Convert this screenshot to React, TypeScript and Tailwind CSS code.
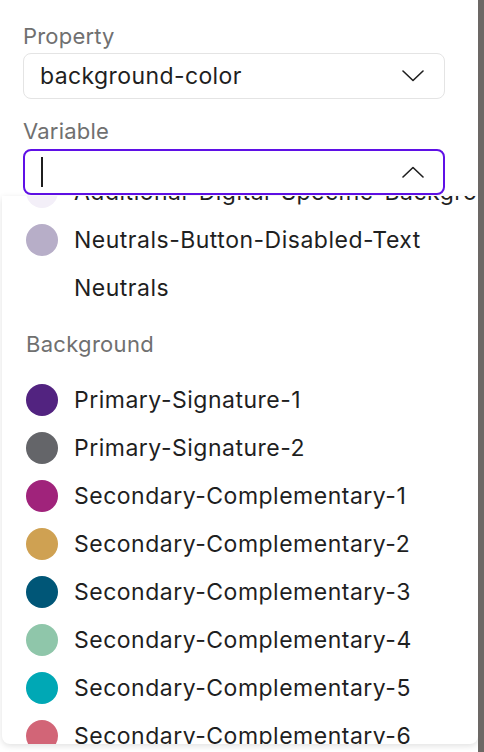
import React from 'react';

type Item = { name: string; color?: string };

const topItems: Item[] = [
  { name: 'Additional-Digital-Specific-Background', color: '#f3eff8' },
  { name: 'Neutrals-Button-Disabled-Text', color: '#b7aec8' },
  { name: 'Neutrals' },
];

const backgroundItems: Item[] = [
  { name: 'Primary-Signature-1', color: '#522380' },
  { name: 'Primary-Signature-2', color: '#646569' },
  { name: 'Secondary-Complementary-1', color: '#a0237b' },
  { name: 'Secondary-Complementary-2', color: '#cfa152' },
  { name: 'Secondary-Complementary-3', color: '#005677' },
  { name: 'Secondary-Complementary-4', color: '#8fc6aa' },
  { name: 'Secondary-Complementary-5', color: '#00a8b5' },
  { name: 'Secondary-Complementary-6', color: '#d26577' },
];

const Chevron = ({ up }: { up?: boolean }) => (
  <svg width="22" height="12" viewBox="0 0 22 12" fill="none" className="shrink-0">
    <path
      d={up ? 'M1 11 L11 1.5 L21 11' : 'M1 1 L11 10.5 L21 1'}
      stroke="#1f1f1f"
      strokeWidth="1.6"
      strokeLinecap="round"
      strokeLinejoin="round"
    />
  </svg>
);

const Row = ({ item }: { item: Item }) => (
  <div className="flex h-[48px] items-center gap-[16px] pl-[24px] whitespace-nowrap">
    {item.color ? (
      <span className="h-[32px] w-[32px] shrink-0 rounded-full" style={{ backgroundColor: item.color }} />
    ) : (
      <span className="h-[32px] w-[32px] shrink-0" />
    )}
    <span className="text-[23px] tracking-[0.5px] text-[#1f1f1f]">{item.name}</span>
  </div>
);

export default function App() {
  return (
    <div
      className="flex h-[752px] w-[484px] overflow-hidden bg-white"
      style={{ fontFamily: '"Inter", "Noto Sans", sans-serif' }}
    >
      <div className="flex min-w-0 flex-1 flex-col">
        <div className="pl-[23px] pr-[33px] pt-[24px]">
          <div className="h-[24px] text-[22px] leading-[24px] tracking-[0.2px] text-[#707070]">Property</div>
          <div className="mt-[5px] flex h-[46px] items-center justify-between rounded-[8px] border border-[#e4e4e4] pl-[16px] pr-[20px]">
            <span className="text-[23px] tracking-[0.4px] text-[#1f1f1f]">background-color</span>
            <Chevron />
          </div>
          <div className="mt-[20px] h-[24px] text-[22px] leading-[24px] tracking-[0.2px] text-[#707070]">Variable</div>
          <div className="mt-[6px] flex h-[46px] items-center justify-between rounded-[8px] border-2 border-[#5f10e6] pl-[16px] pr-[19px]">
            <span className="h-[30px] w-[2px] bg-[#1f1f1f]" />
            <Chevron up />
          </div>
        </div>
        <div className="ml-[2px] mt-[1px] h-[548px] overflow-hidden rounded-b-[8px] bg-white shadow-[0_2px_6px_rgba(0,0,0,0.12)]">
          <div className="-mt-[28px]">
            {topItems.map((it) => (
              <Row key={it.name} item={it} />
            ))}
            <div className="flex h-[64px] items-center pl-[24px] text-[22px] tracking-[0.3px] text-[#707070]">Background</div>
            {backgroundItems.map((it) => (
              <Row key={it.name} item={it} />
            ))}
          </div>
        </div>
      </div>
      <div className="w-[6px] shrink-0 bg-[#6c6865]" />
    </div>
  );
}
